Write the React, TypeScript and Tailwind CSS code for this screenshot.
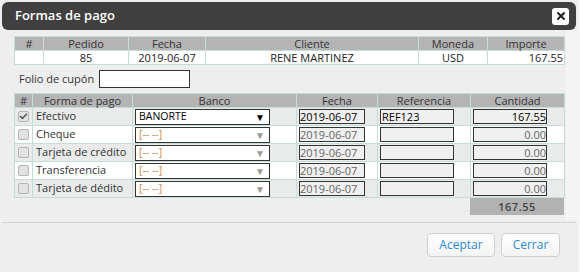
import { X, Check } from "lucide-react";

const pagos = [
  { nombre: "Efectivo", banco: "BANORTE", ref: "REF123", cantidad: "167.55", activo: true },
  { nombre: "Cheque", banco: "[-- --]", ref: "", cantidad: "0.00", activo: false },
  { nombre: "Tarjeta de crédito", banco: "[-- --]", ref: "", cantidad: "0.00", activo: false },
  { nombre: "Transferencia", banco: "[-- --]", ref: "", cantidad: "0.00", activo: false },
  { nombre: "Tarjeta de dédito", banco: "[-- --]", ref: "", cantidad: "0.00", activo: false },
];

const th = "border border-[#c6dcd9] bg-[#b4b4b4] font-normal text-[#333] p-0";
const td = "border border-[#c6dcd9] p-0";

export default function App() {
  return (
    <div
      className="w-[580px] h-[272px] bg-[#f6f6f6] overflow-hidden text-[11px] text-[#222]"
      style={{ fontFamily: '"Open Sans", "Liberation Sans", sans-serif' }}
    >
      <div className="w-[578px] h-[272px] bg-[#eeeeee] flex flex-col">
        {/* header */}
        <div className="mx-[2px] mt-[2px] h-[28px] bg-[#404040] rounded-[6px] flex items-center justify-between pl-[13px] pr-[7px]">
          <span className="text-white text-[13px] font-semibold">Formas de pago</span>
          <button
            type="button"
            className="w-[17px] h-[17px] bg-white rounded-[3px] flex items-center justify-center text-[#222]"
          >
            <X size={12} strokeWidth={4} />
          </button>
        </div>

        {/* body */}
        <div className="flex h-[190px]">
          <div className="w-[566px] pl-[14px] pt-[6px]">
            <table className="border-collapse w-[550px] table-fixed">
              <colgroup>
                <col className="w-[29px]" />
                <col className="w-[85px]" />
                <col className="w-[77px]" />
                <col className="w-[213px]" />
                <col className="w-[69px]" />
                <col className="w-[77px]" />
              </colgroup>
              <thead>
                <tr className="h-[14px] leading-[13px]">
                  <th className={th}>#</th>
                  <th className={th}>Pedido</th>
                  <th className={th}>Fecha</th>
                  <th className={th}>Cliente</th>
                  <th className={th}>Moneda</th>
                  <th className={th}>Importe</th>
                </tr>
              </thead>
              <tbody>
                <tr className="h-[14px] leading-[13px] bg-white">
                  <td className={td}></td>
                  <td className={td + " text-center"}>85</td>
                  <td className={td + " text-center"}>2019-06-07</td>
                  <td className={td + " text-center"}>RENE MARTINEZ</td>
                  <td className={td + " text-center"}>USD</td>
                  <td className={td + " text-right pr-[1px]"}>167.55</td>
                </tr>
              </tbody>
            </table>

            <div className="h-[28px] flex items-center pl-[5px] gap-[5px]">
              <span className="text-[#333]">Folio de cupón</span>
              <input className="w-[91px] h-[18px] bg-white border border-[#333] outline-none" />
            </div>

            <table className="border-collapse w-[550px] table-fixed">
              <colgroup>
                <col className="w-[18px]" />
                <col className="w-[100px]" />
                <col className="w-[164px]" />
                <col className="w-[81px]" />
                <col className="w-[93px]" />
                <col className="w-[94px]" />
              </colgroup>
              <thead>
                <tr className="h-[14px] leading-[13px]">
                  <th className={th}>#</th>
                  <th className={th}>Forma de pago</th>
                  <th className={th}>Banco</th>
                  <th className={th}>Fecha</th>
                  <th className={th}>Referencia</th>
                  <th className={th}>Cantidad</th>
                </tr>
              </thead>
              <tbody>
                {pagos.map((p, i) => (
                  <tr key={p.nombre} className={"h-[18px] " + (i % 2 === 0 ? "bg-[#e9eaea]" : "bg-white")}>
                    <td className={td}>
                      <div className="ml-[3px] w-[11px] h-[11px] rounded-[2px] border border-[#b5b5b5] bg-[#e2e2e2] flex items-center justify-center text-[#555]">
                        {p.activo && <Check size={9} strokeWidth={4} />}
                      </div>
                    </td>
                    <td className={td + " pl-[3px] text-[#333] whitespace-nowrap"}>{p.nombre}</td>
                    <td className={td + " pl-[2px]"}>
                      <div className="w-[135px] h-[16px] bg-white border border-[#333] flex items-center justify-between pl-[3px] pr-[4px] text-[10.5px]">
                        <span className={p.activo ? "text-black" : "text-[#c88a4e]"}>{p.banco}</span>
                        <span className={"text-[10px] leading-none " + (p.activo ? "text-black" : "text-[#999]")}>▼</span>
                      </div>
                    </td>
                    <td className={td + " pl-[2px]"}>
                      <div className={"w-[66px] h-[15px] bg-[#f0f0f0] border border-[#333] leading-[13px] " + (p.activo ? "text-black" : "text-[#666]")}>
                        2019-06-07
                      </div>
                    </td>
                    <td className={td + " pl-[2px]"}>
                      <div className="w-[74px] h-[15px] bg-[#f0f0f0] border border-[#333] leading-[13px] pl-[1px] text-black">
                        {p.ref}
                      </div>
                    </td>
                    <td className={td + " pl-[2px]"}>
                      <div className={"w-[74px] h-[15px] bg-[#f0f0f0] border border-[#333] leading-[13px] text-right " + (p.activo ? "text-black" : "text-[#666]")}>
                        {p.cantidad}
                      </div>
                    </td>
                  </tr>
                ))}
              </tbody>
            </table>
            <div className="flex justify-end w-[550px]">
              <div className="w-[94px] h-[17px] bg-[#b2b2b2] text-center text-[#444] font-semibold tracking-[0.5px] leading-[17px]">
                167.55
              </div>
            </div>
          </div>
          <div className="w-[12px] bg-[#f4f4f4]" />
        </div>

        {/* footer */}
        <div className="mx-[2px] border-t border-[#d6d6d6] mt-[2px]" />
        <div className="flex justify-end gap-[6px] pr-[18px] pt-[10px]">
          <button
            type="button"
            className="w-[68px] h-[24px] rounded-[4px] border border-[#cfcfcf] bg-gradient-to-b from-white to-[#f3f3f3] text-[#2b8ad0] text-[12px]"
          >
            Aceptar
          </button>
          <button
            type="button"
            className="w-[59px] h-[24px] rounded-[4px] border border-[#cfcfcf] bg-gradient-to-b from-white to-[#f3f3f3] text-[#2b8ad0] text-[12px]"
          >
            Cerrar
          </button>
        </div>
      </div>
    </div>
  );
}
